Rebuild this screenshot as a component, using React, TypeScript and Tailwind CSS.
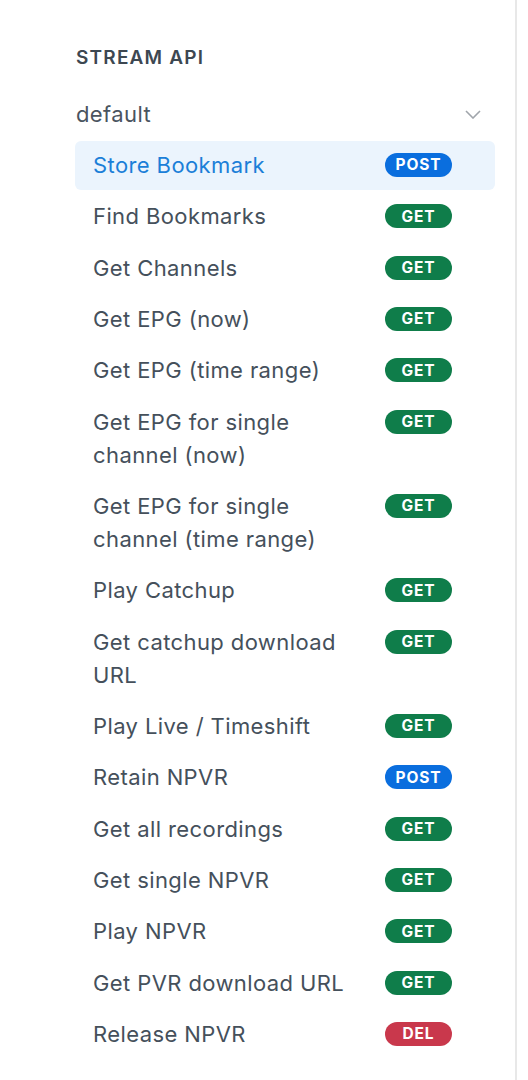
import React from "react";

type Method = "GET" | "POST" | "DEL";
const items: { label: string; method: Method; active?: boolean }[] = [
  { label: "Store Bookmark", method: "POST", active: true },
  { label: "Find Bookmarks", method: "GET" },
  { label: "Get Channels", method: "GET" },
  { label: "Get EPG (now)", method: "GET" },
  { label: "Get EPG (time range)", method: "GET" },
  { label: "Get EPG for single channel (now)", method: "GET" },
  { label: "Get EPG for single channel (time range)", method: "GET" },
  { label: "Play Catchup", method: "GET" },
  { label: "Get catchup download URL", method: "GET" },
  { label: "Play Live / Timeshift", method: "GET" },
  { label: "Retain NPVR", method: "POST" },
  { label: "Get all recordings", method: "GET" },
  { label: "Get single NPVR", method: "GET" },
  { label: "Play NPVR", method: "GET" },
  { label: "Get PVR download URL", method: "GET" },
  { label: "Release NPVR", method: "DEL" },
];

function Badge({ method }: { method: Method }) {
  const cls =
    method === "POST"
      ? "bg-[#0a6ede]"
      : method === "GET"
      ? "bg-[#0f7d4a]"
      : "bg-[#c9384c]";
  return (
    <span
      className={`${cls} mt-[4px] flex h-[24px] w-[67px] shrink-0 items-center justify-center rounded-full text-[15.5px] font-bold tracking-[0.9px] text-white`}
    >
      {method}
    </span>
  );
}

export default function App() {
  return (
    <div
      className="flex min-h-[1080px] w-[528px] bg-white"
      style={{ fontFamily: "Inter, 'Noto Sans', sans-serif" }}
    >
      <div className="w-[517px] shrink-0 border-r-2 border-[#e8e8e8] bg-white pr-[20px] pl-[75px]">
        <div className="pt-[46px] pl-[1px] text-[19px] leading-[24px] font-semibold tracking-[1.2px] text-[#3d4751]">
          STREAM API
        </div>
        <div className="mt-[28px] flex items-center justify-between pr-[14px] pl-[1px]">
          <span className="text-[22px] leading-[33px] tracking-[0.4px] text-[#4a545f]">default</span>
          <svg width="16" height="9" viewBox="0 0 16 9" fill="none">
            <path d="M1 1l7 7 7-7" stroke="#a0a5ab" strokeWidth="1.6" />
          </svg>
        </div>
        <div className="mt-[10px] flex flex-col gap-[2.33px]">
          {items.map((it) => (
            <div
              key={it.label}
              className={`flex items-start gap-[16px] rounded-[6px] py-[8px] pr-[43px] pl-[18px] ${
                it.active ? "bg-[#ebf4fd]" : ""
              }`}
            >
              <span
                className={`flex-1 text-[22px] leading-[33px] tracking-[0.4px] ${
                  it.active ? "text-[#1b7fd8]" : "text-[#45505b]"
                }`}
              >
                {it.label}
              </span>
              <Badge method={it.method} />
            </div>
          ))}
        </div>
      </div>
      <div className="flex-1 bg-white" />
    </div>
  );
}
